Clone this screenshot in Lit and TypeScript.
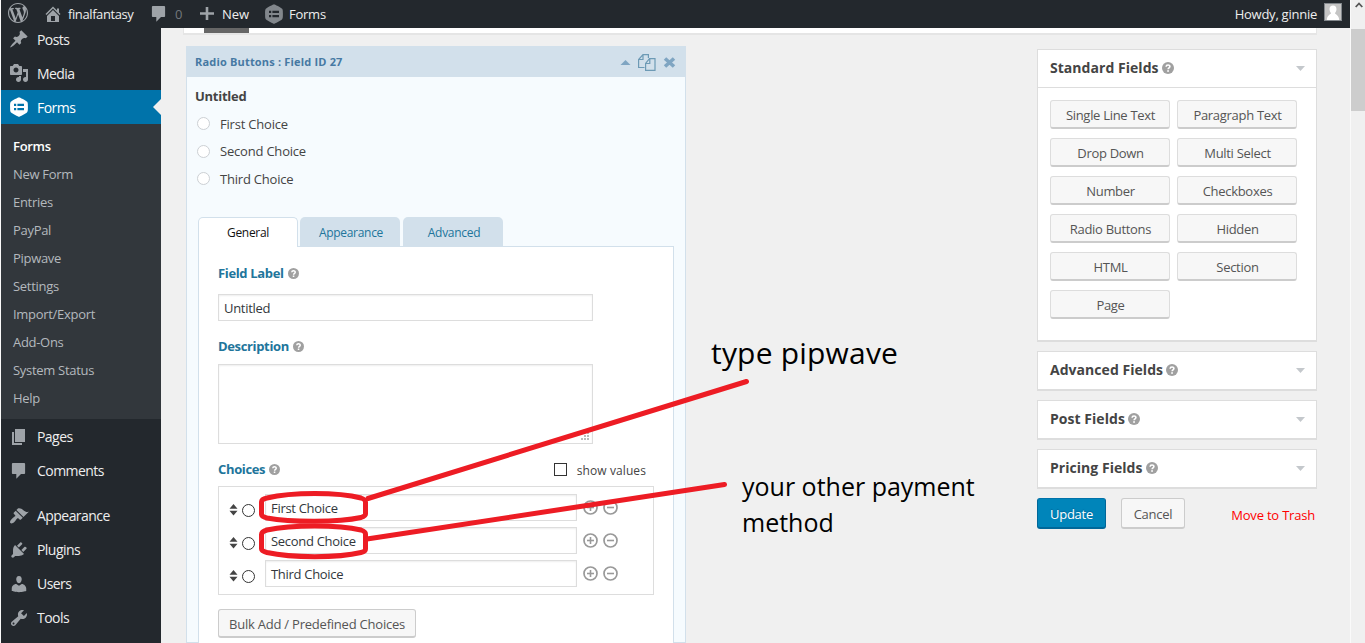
import { LitElement, html, svg, css, nothing } from "lit";
import { customElement } from "lit/decorators.js";

const ICONS: Record<string, string> = {
  wordpress:
    "M20 10c0-5.51-4.49-10-10-10C4.48 0 0 4.49 0 10c0 5.52 4.48 10 10 10 5.51 0 10-4.48 10-10zM7.78 15.37L4.37 6.22c.55-.02 1.17-.08 1.17-.08.5-.06.44-1.13-.06-1.11 0 0-1.45.11-2.37.11-.18 0-.37 0-.58-.01C4.12 2.69 6.87 1.11 10 1.11c2.33 0 4.45.87 6.05 2.34-.68-.11-1.65.39-1.65 1.58 0 .74.45 1.36.9 2.1.35.61.55 1.36.55 2.46 0 1.49-1.4 5-1.4 5l-3.03-8.37c.54-.02.82-.17.82-.17.5-.05.44-1.25-.06-1.22 0 0-1.44.12-2.38.12-.87 0-2.33-.12-2.33-.12-.5-.03-.56 1.2-.06 1.22l.92.08 1.26 3.41zM17.41 10c.24-.64.74-1.87.43-4.25.7 1.29 1.05 2.71 1.05 4.25 0 3.29-1.73 6.24-4.4 7.78.97-2.59 1.94-5.2 2.92-7.78zM6.1 18.09C3.12 16.65 1.11 13.53 1.11 10c0-1.3.23-2.48.72-3.59C3.25 10.3 4.67 14.2 6.1 18.09zm4.03-6.63l2.58 6.98c-.86.29-1.76.45-2.71.45-.79 0-1.57-.11-2.29-.33.81-2.38 1.62-4.74 2.42-7.1z",
  home: "M16 8.5l1.53 1.53-1.06 1.06L10 4.6l-6.47 6.49-1.06-1.06L10 2.5l4 4v-2h2v4zm-6-2.46l6 5.99V18H4v-5.97zM12 17v-5H8v5h4z",
  plus: "M8.7 3h2.6v5.200H17v2.600h-5.700V16H8.700v-5.200H3V8.200h5.700z",
  pin: "M10.44 3.02l1.82-1.82 6.36 6.35-1.83 1.82c-1.05-.68-2.48-.57-3.41.36l-.75.75c-.92.93-1.04 2.35-.35 3.41l-1.83 1.82-2.41-2.41-2.8 2.79c-.42.42-3.38 2.71-3.8 2.29s1.86-3.39 2.28-3.81l2.79-2.79L4.1 9.36l1.83-1.82c1.05.69 2.48.57 3.4-.36l.75-.75c.93-.92 1.05-2.35.36-3.41z",
  media:
    "M13 11V4c0-.55-.45-1-1-1h-1.67L9 1H5L3.67 3H2c-.55 0-1 .45-1 1v7c0 .55.45 1 1 1h10c.55 0 1-.45 1-1zM7 4.5c1.38 0 2.5 1.12 2.5 2.5S8.38 9.5 7 9.5 4.5 8.38 4.5 7 5.62 4.5 7 4.5zM14 6h5v10.5c0 1.38-1.12 2.5-2.5 2.5S14 17.88 14 16.5s1.12-2.5 2.5-2.5c.17 0 .34.02.5.05V9h-3V6zm-4 8.05V13h2v3.5c0 1.38-1.12 2.5-2.5 2.5S7 17.88 7 16.5 8.12 14 9.5 14c.17 0 .34.02.5.05z",
  page: "M6 15V2h10v13H6zm-1 1h8v2H3V5h2v11z",
  comment:
    "M4 2h11c.6 0 1.1.5 1.1 1.1v8.8c0 .6-.5 1.1-1.1 1.1h-3l-4.7 4.8V13H4c-.6 0-1.1-.5-1.1-1.1V3.1C2.9 2.5 3.400 2 4 2z",
  appearance:
    "M14.48 11.06L7.41 3.99l1.5-1.5c.5-.56 2.3-.47 3.51.32 1.21.8 1.43 1.28 2.91 2.1 1.18.64 2.45 1.26 4.45.85zm-.71.71L6.7 4.7 4.93 6.47c-.39.39-.39 1.02 0 1.41l1.06 1.06c.39.39.39 1.03 0 1.42-.6.6-1.43 1.11-2.21 1.69-.35.26-.7.53-1.01.84C1.43 14.23.4 16.08 1.4 17.07c.99 1 2.84-.03 4.18-1.36.31-.31.58-.66.85-1.02.57-.78 1.08-1.61 1.69-2.21.39-.39 1.02-.39 1.41 0l1.06 1.06c.39.39 1.02.39 1.41 0z",
  plugins:
    "M13.11 4.36L9.87 7.6 8 5.73l3.24-3.24c.35-.34 1.05-.2 1.56.32.52.51.66 1.21.31 1.55zm-8 1.77l.91-1.12 9.01 9.01-1.19.84c-.71.71-2.63 1.16-3.82 1.16H6.14L4.9 17.26c-.59.59-1.54.59-2.12 0-.59-.58-.59-1.53 0-2.12l1.24-1.24v-3.88c0-1.13.4-3.19 1.09-3.89zm7.26 3.97l3.24-3.24c.34-.35 1.04-.21 1.55.31.52.51.66 1.21.31 1.55l-3.24 3.25z",
  users:
    "M10 9.25c-2.27 0-2.73-3.44-2.73-3.44C7 4.02 7.82 2 9.97 2c2.16 0 2.98 2.02 2.71 3.81 0 0-.41 3.44-2.68 3.44zm0 2.57L12.72 10c2.39 0 4.52 2.33 4.52 4.53v2.49s-3.65 1.13-7.24 1.13c-3.65 0-7.24-1.13-7.24-1.13v-2.49c0-2.25 1.94-4.48 4.47-4.48z",
  tools:
    "M16.68 9.77c-1.34 1.34-3.3 1.67-4.95.99l-5.41 6.52c-.99.99-2.59.99-3.58 0s-.99-2.59 0-3.57l6.52-5.42c-.68-1.65-.35-3.61.99-4.95 1.28-1.28 3.12-1.62 4.72-1.06l-2.89 2.89 2.82 2.82 2.86-2.87c.53 1.58.18 3.39-1.08 4.65zM3.81 16.21c.4.39 1.04.39 1.43 0 .4-.4.4-1.04 0-1.43-.39-.4-1.03-.4-1.43 0-.39.39-.39 1.03 0 1.43z",
  forms:
    "M10 .2c.5 0 7.100 3.500 7.900 4.300.8.800 1 1.600 1 5.500s-.2 4.700-1 5.500c-.8.800-7.400 4.300-7.900 4.300s-7.100-3.500-7.900-4.300c-.8-.8-1-1.600-1-5.500s.2-4.700 1-5.500C2.900 3.700 9.500.2 10 .2zM5 6.800v2.200h2.200V6.800zm3.400 0v2.200H15V6.800zM5 11v2.200h2.200V11zm3.400 0v2.200H15V11z",
};

const icon = (name: string, size = 20) => html`
  <svg class="icon" width=${size} height=${size} viewBox="0 0 20 20">
    <path fill="currentColor" fill-rule="evenodd" d=${ICONS[name]} />
  </svg>
`;

const help = (size: number) => html`
  <svg class="help" width=${size} height=${size} viewBox="0 0 12 12">
    <circle cx="6" cy="6" r="6" fill="#a0a0a0" />
    <path d="M4.100 4.700C4.200 2.500 7.900 2.500 7.900 4.600 7.900 5.900 6.100 5.900 6.100 7.300" fill="none" stroke="#fff" stroke-width="1.600" />
    <rect x="5.200" y="8.200" width="1.700" height="1.600" fill="#fff" />
  </svg>
`;

const caret = html`
  <svg class="caret" width="9" height="5" viewBox="0 0 9 5"><path d="M0 0h9L4.500 5z" fill="#c4c8cc" /></svg>
`;

const sorter = html`
  <svg class="sorter" width="9" height="12" viewBox="0 0 9 12">
    <path d="M4.500 0L8.500 4.800h-8zM4.500 11.600L.5 6.800h8z" fill="#444" />
  </svg>
`;

const round = (kind: "add" | "remove") => html`
  <svg class="round" width="15" height="15" viewBox="0 0 15 15">
    <circle cx="7.500" cy="7.500" r="6.500" fill="none" stroke="#999" stroke-width="1.700" />
    <path d="M4 7.500h7" stroke="#999" stroke-width="1.600" />
    ${kind === "add" ? svg`<path d="M7.500 4v7" stroke="#999" stroke-width="1.600" />` : nothing}
  </svg>
`;

@customElement("app-root")
export class AppRoot extends LitElement {
  static styles = css`
    :host {
      display: block;
      position: relative;
      width: 1365px;
      height: 643px;
      overflow: hidden;
      background: #f0f0f0;
      color: #444;
      font: 13px/20px "Open Sans", "Noto Sans", sans-serif;
      letter-spacing: -0.25px;
    }
    * { box-sizing: border-box; }
    svg { display: block; flex: none; }

    .window { display: flex; height: 643px; padding-left: 1px; background: #fafafa; }
    .page { width: 1349px; display: flex; flex-direction: column; }
    .scrollbar { width: 14px; margin-left: 1px; background: #f0f0f0; }
    .scrollbar .up { height: 29px; padding: 2px 0 0 4px; }
    .scrollbar .thumb { height: 82px; background: #cdcdcd; }

    .bar { flex: none; height: 28px; background: #23282d; color: #eee; display: flex; align-items: center; line-height: 28px; }
    .bar .icon { color: #9ea3a8; }
    .bar .logo { padding: 0 15px 3px 7px; }
    .site { display: flex; width: 106px; gap: 5px; align-items: center; letter-spacing: -0.6px; }
    .site { letter-spacing: -0.4px; }
    .count { display: flex; width: 48px; gap: 6px; align-items: center; color: #72777c; }
    .new { display: flex; width: 67px; gap: 5px; align-items: center; letter-spacing: 0; }
    .barforms { display: flex; gap: 5px; align-items: center; letter-spacing: -0.25px; }
    .bar .barforms .icon { color: #82878c; }
    .howdy { margin-left: auto; margin-right: 8px; display: flex; gap: 7px; align-items: center; letter-spacing: -0.25px; }
    .avatar { width: 18px; height: 18px; border: 1px solid #82878c; background: #c4c4c4; margin-bottom: 4px; }

    .body { flex: 1; min-height: 0; display: flex; }
    .menu { width: 160px; background: #23282d; overflow: hidden; color: #eee; font-size: 14px; }
    .menu .item { height: 34px; display: flex; align-items: center; padding-left: 8px; gap: 8px; letter-spacing: -0.55px; }
    .menu .lower span { padding-top: 2px; }
    .menu .icon { color: #9ea3a8; }
    .menu .first { margin-top: -6px; }
    .menu .active { background: #0073aa; color: #fff; }
    .menu .active .icon { color: #fff; }
    .menu .notch { margin-left: auto; border: 8px solid transparent; border-left: 0; border-right-color: #f0f0f0; }
    .sub { height: 295px; padding: 8px 12px; background: #32373c; color: #b4b9be; font-size: 13px; line-height: 28px; margin-bottom: 1px; letter-spacing: -0.3px; }
    .sub .current { color: #fff; font-weight: 600; }
    .gap { height: 11px; }

    .content { flex: 1; min-width: 0; background: #f0f0f0; padding-left: 22px; }
    .toolbar { height: 7px; width: 1134px; background: #fff; border: 1px solid #e5e5e5; border-width: 0 1px 2px; padding-left: 20px; }
    .toolbar .mark { width: 45px; height: 5px; background: #666; }
    .columns { display: flex; }

    .field { width: 500px; height: 597px; margin: 11px 0 0 3px; border: 1px solid #d2e0eb; border-top: 0; background: #f6fbfe; }
    .fieldhead { height: 31px; margin: 0 -1px; padding: 0 5px 0 9px; background: #d2e0eb; color: #4679a3; font-size: 11px; font-weight: 700; letter-spacing: 0.18px; display: flex; align-items: center; }
    .fieldhead .tools { margin-left: auto; }
    .preview { height: 140px; padding: 9px 8px 0; }
    .preview .title { font-weight: 700; height: 24px; }
    .preview .option { display: flex; align-items: center; height: 27.500px; gap: 10px; letter-spacing: -0.2px; }
    .preview .dot { width: 13px; height: 13px; margin-left: 2px; border: 1px solid #ccd0d4; border-radius: 50%; background: #fff; }

    .tabs { display: flex; gap: 3px; padding-left: 11px; font-size: 12px; line-height: 32px; text-align: center; color: #21759b; letter-spacing: -0.3px; }
    .tab { width: 100px; height: 29px; border-radius: 5px 5px 0 0; background: #d2e0eb; padding-left: 2px; }
    .tab.on { height: 30px; margin-bottom: -1px; z-index: 1; background: #fff; border: 1px solid #d2e0eb; border-bottom: 0; color: #111; line-height: 30px; padding-left: 0; margin-right: -1px; }
    .pane { width: 476px; height: 400px; margin-left: 11px; padding: 16px 19px; background: #fff; border: 1px solid #d2e0eb; }
    .label { display: flex; align-items: center; gap: 4px; height: 20px; color: #21759b; font-weight: 700; letter-spacing: -0.35px; }
    .input { width: 375px; height: 27px; border: 1px solid #ddd; background: #fff; box-shadow: inset 0 1px 2px rgba(0, 0, 0, 0.07); padding-left: 5px; line-height: 27px; color: #32373c; margin: 11px 0 15px; letter-spacing: -0.3px; }
    .area { width: 375px; height: 80px; margin: 8px 0 15px; border: 1px solid #ddd; box-shadow: inset 0 1px 2px rgba(0, 0, 0, 0.07); display: flex; align-items: flex-end; justify-content: flex-end; padding: 3px; }
    .choicehead { display: flex; justify-content: space-between; width: 428px; height: 20px; }
    .show { display: flex; align-items: center; gap: 10px; font-size: 12px; padding-top: 3px; letter-spacing: 0.1px; }
    .box { width: 13px; height: 13px; border: 1px solid #333; background: #fff; margin-top: -3px; }
    .choices { width: 436px; height: 109px; margin: 7px 0 14px; border: 1px solid #ddd; padding: 7px 10px; display: grid; gap: 6px; }
    .choice { height: 27px; display: flex; align-items: center; }
    .sorter { margin-top: 5px; }
    .ring { width: 13px; height: 13px; margin: 5px 10px 0 4px; border: 1px solid #333; border-radius: 50%; }
    .choice .input { width: 312px; margin: 0 6px 0 0; }
    .choice .round { margin: 0 5px 1px 0; }

    .button { height: 29px; border: 1px solid #ccc; border-bottom-width: 2px; border-radius: 3px; background: #f7f7f7; color: #555; line-height: 28px; text-align: center; }
    .bulk { width: 198px; letter-spacing: -0.22px; }

    .side { width: 280px; margin: 14px 0 0 351px; }
    .postbox { border: 1px solid #ddd; border-bottom-width: 2px; background: #fff; margin-bottom: 9px; }
    .postbox .head { height: 37px; padding: 0 11px 2px 12px; display: flex; align-items: center; gap: 3px; font-size: 14px; font-weight: 700; letter-spacing: 0.04px; }
    .postbox .head .caret { margin: 2px 0 0 auto; }
    .grid { border-top: 1px solid #ddd; height: 253px; padding: 12px; display: grid; grid-template-columns: 120px 120px; grid-auto-rows: 29px; gap: 9px 7px; letter-spacing: -0.3px; }
    .grid .button { border-color: #ddd; border-bottom-color: #ccc; padding-left: 1px; }
    .actions { display: flex; align-items: flex-start; }
    .actions .button { height: 31px; line-height: 30px; }
    .actions .update { width: 69px; background: #0085ba; border-color: #0073aa #006799 #006799; color: #fff; text-shadow: 0 -1px 1px #006799; }
    .actions .cancel { width: 64px; margin-left: 15px; }
    .trash { color: #f00; margin: 7px 2px 0 auto; letter-spacing: -0.2px; }

    .notes { position: absolute; left: 0; top: 0; pointer-events: none; }
    .note { position: absolute; color: #000; white-space: nowrap; letter-spacing: 0; }
    .note.one { left: 711px; top: 332px; font-size: 30px; line-height: 42px; letter-spacing: 0.2px; }
    .note.two { left: 742px; top: 468px; font-size: 25px; line-height: 36px; }
  `;

  private postbox(title: string, items?: string[]) {
    return html`
      <section class="postbox">
        <div class="head"><span>${title}</span>${help(12)}${caret}</div>
        ${items ? html`<div class="grid">${items.map((t) => html`<div class="button">${t}</div>`)}</div>` : nothing}
      </section>
    `;
  }

  private item(name: string, label: string, extra = "") {
    return html`
      <div class="item ${extra}">
        ${icon(name)}<span>${label}</span>${extra.includes("active") ? html`<i class="notch"></i>` : nothing}
      </div>
    `;
  }

  render() {
    const subs = ["Forms", "New Form", "Entries", "PayPal", "Pipwave", "Settings", "Import/Export", "Add-Ons", "System Status", "Help"];
    const choices = ["First Choice", "Second Choice", "Third Choice"];
    return html`
      <div class="window">
        <div class="page">
          <header class="bar">
            <div class="logo">${icon("wordpress")}</div>
            <div class="site">${icon("home")}<span>finalfantasy</span></div>
            <div class="count">${icon("comment")}<span>0</span></div>
            <div class="new">${icon("plus")}<span>New</span></div>
            <div class="barforms">${icon("forms")}<span>Forms</span></div>
            <div class="howdy">
              <span>Howdy, ginnie</span>
              <svg class="avatar" viewBox="0 0 16 16">
                <path d="M8 1.500c2.300 0 3.500 1.700 3.500 3.700S10.300 8.500 10 9.200c.2 1.200 4 1.600 4.200 6.800H1.800C2 10.800 5.800 10.400 6 9.200 5.700 8.500 4.500 7.200 4.500 5.200S5.700 1.500 8 1.500z" fill="#fff" />
              </svg>
            </div>
          </header>
          <div class="body">
            <nav class="menu">
              ${this.item("pin", "Posts", "first lower")} ${this.item("media", "Media", "lower")}
              ${this.item("forms", "Forms", "active lower")}
              <div class="sub">${subs.map((s, i) => html`<div class=${i ? "" : "current"}>${s}</div>`)}</div>
              ${this.item("page", "Pages")} ${this.item("comment", "Comments")}
              <div class="gap"></div>
              ${this.item("appearance", "Appearance")} ${this.item("plugins", "Plugins")} ${this.item("users", "Users")}
              ${this.item("tools", "Tools")}
            </nav>
            <main class="content">
              <div class="toolbar"><div class="mark"></div></div>
              <div class="columns">
                <section class="field">
                  <div class="fieldhead">
                    <span>Radio Buttons : Field ID 27</span>
                    <div class="tools">
                      <svg width="66" height="20" viewBox="0 0 66 20">
                        <path d="M5.500 13h10l-5-5z" fill="#7fa5c2" />
                        <g fill="none" stroke="#6d9ab5" stroke-width="1.200">
                          <path d="M29.500 15.500H23.600V7.500L28 2.600h5.400V6M28 2.600V7.500H23.600" />
                          <path d="M34.500 6.600h5.500v11.800H30.600V11.500zM34.800 6.600v4.900h-4.200" />
                        </g>
                        <path d="M50 6.500l9 8M59 6.500l-9 8" stroke="#7fa5c2" stroke-width="3.600" />
                      </svg>
                    </div>
                  </div>
                  <div class="preview">
                    <div class="title">Untitled</div>
                    ${choices.map((c) => html`<div class="option"><i class="dot"></i><span>${c}</span></div>`)}
                  </div>
                  <div class="tabs">
                    <div class="tab on">General</div>
                    <div class="tab">Appearance</div>
                    <div class="tab">Advanced</div>
                  </div>
                  <div class="pane">
                    <div class="label">Field Label ${help(11)}</div>
                    <div class="input">Untitled</div>
                    <div class="label">Description ${help(11)}</div>
                    <div class="area">
                      <svg width="8" height="8" viewBox="0 0 8 8">
                        <path d="M6 0h2v2H6zM3 3h2v2H3zM6 3h2v2H6zM0 6h2v2H0zM3 6h2v2H3zM6 6h2v2H6z" fill="#bbb" />
                      </svg>
                    </div>
                    <div class="choicehead">
                      <div class="label">Choices ${help(11)}</div>
                      <div class="show"><i class="box"></i><span>show values</span></div>
                    </div>
                    <div class="choices">
                      ${choices.map(
                        (c) => html`
                          <div class="choice">
                            ${sorter}<i class="ring"></i>
                            <div class="input">${c}</div>
                            ${round("add")}${round("remove")}
                          </div>
                        `
                      )}
                    </div>
                    <div class="button bulk">Bulk Add / Predefined Choices</div>
                  </div>
                </section>
                <aside class="side">
                  ${this.postbox("Standard Fields", [
                    "Single Line Text", "Paragraph Text", "Drop Down", "Multi Select", "Number", "Checkboxes",
                    "Radio Buttons", "Hidden", "HTML", "Section", "Page",
                  ])}
                  ${this.postbox("Advanced Fields")} ${this.postbox("Post Fields")} ${this.postbox("Pricing Fields")}
                  <div class="actions">
                    <div class="button update">Update</div>
                    <div class="button cancel">Cancel</div>
                    <div class="trash">Move to Trash</div>
                  </div>
                </aside>
              </div>
            </main>
          </div>
        </div>
        <div class="scrollbar">
          <div class="up">
            <svg width="8" height="6" viewBox="0 0 8 6"><path d="M.7 5L4 1.500 7.300 5" fill="none" stroke="#555" stroke-width="1.800" /></svg>
          </div>
          <div class="thumb"></div>
        </div>
      </div>
      <svg class="notes" width="1365" height="643" viewBox="0 0 1365 643">
        <g fill="none" stroke="#ed1c24" stroke-width="5" stroke-linecap="round">
          <path d="M261.500 502Q261.500 499 267 498C292 492 338 492 361 498Q365.500 499.500 365.500 502V514Q365.500 516 361 517.500C338 522.500 292 522.500 267 518Q261.500 516.500 261.500 514.500Z" />
          <path d="M261.500 534.500Q261.500 531.500 267 530C292 524.500 338 524.500 361 530Q365.500 531.500 365.500 534V549Q365.500 551.500 361 552.500C338 558 292 558 267 552.500Q261.500 551 261.500 549Z" />
          <path d="M368 498.500L746.500 381.500M367 539L724.500 484.500" />
        </g>
      </svg>
      <div class="note one">type pipwave</div>
      <div class="note two">your other payment<br />method</div>
    `;
  }
}
